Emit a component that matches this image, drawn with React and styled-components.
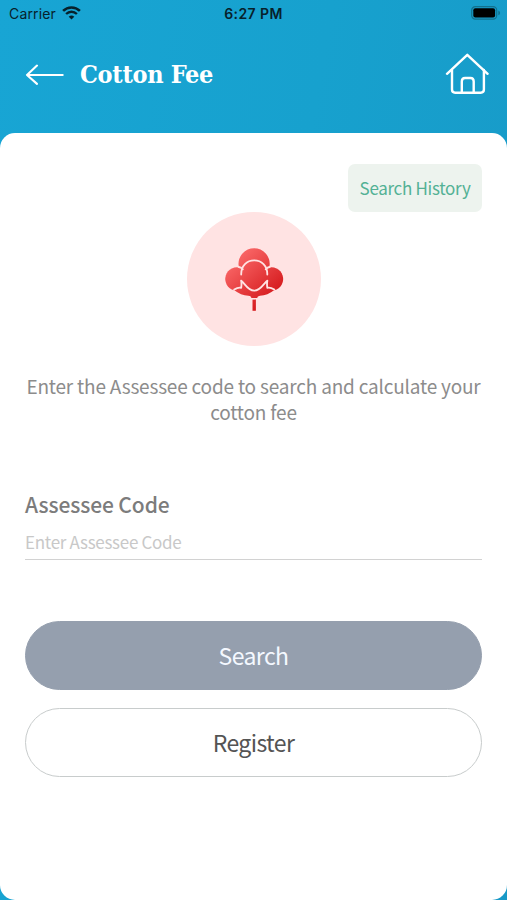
import React from "react";
import styled, { createGlobalStyle, css } from "styled-components";

const GlobalStyle = createGlobalStyle`
  * {
    box-sizing: border-box;
  }

  body {
    margin: 0;
    font-family: "Noto Sans CJK SC", "Open Sans", sans-serif;
  }
`;

const Screen = styled.div`
  display: flex;
  flex-direction: column;
  height: 900px;
  background: linear-gradient(100deg, #18a5d4 0%, #17a1ce 50%, #1899c7 100%);
`;

const StatusBar = styled.div`
  display: grid;
  grid-template-columns: 1fr auto 1fr;
  align-items: center;
  height: 28px;
  padding: 0 6px 2px;
  font-family: Inter, sans-serif;
  font-size: 14px;
  color: #07212b;
`;

const Carrier = styled.div`
  display: flex;
  align-items: center;
  gap: 6px;
  padding-left: 3px;
  letter-spacing: 0.15px;
`;

const Clock = styled.div`
  font-weight: 600;
  letter-spacing: 0.4px;
`;

const Battery = styled.svg`
  justify-self: end;
`;

const Header = styled.header`
  display: flex;
  align-items: center;
  height: 105px;
  padding: 0 18px 13px 25px;
`;

const Title = styled.h1`
  flex: 1;
  margin: 1px 0 0 16px;
  font-family: "DejaVu Serif", serif;
  font-stretch: condensed;
  font-size: 25px;
  font-weight: 700;
  line-height: 32px;
  letter-spacing: -0.3px;
  color: #fff;
`;

const IconButton = styled.button`
  display: flex;
  padding: 0;
  border: 0;
  background: none;
`;

const Card = styled.main`
  display: flex;
  flex: 1;
  flex-direction: column;
  padding: 31px 25px 0;
  border-radius: 15px;
  background: #fff;
`;

const HistoryButton = styled.button`
  align-self: flex-end;
  width: 134px;
  height: 48px;
  padding: 0 0 1px;
  border: 0;
  border-radius: 7px;
  background: #edf3ee;
  font-family: inherit;
  font-size: 17px;
  letter-spacing: -0.3px;
  color: #53b195;
  white-space: nowrap;
`;

const Emblem = styled.div`
  display: flex;
  align-items: center;
  align-self: center;
  justify-content: center;
  width: 134px;
  height: 134px;
  padding-top: 2px;
  border-radius: 50%;
  background: #ffe3e3;
`;

const Intro = styled.p`
  margin: 27px -5px 0;
  font-size: 19px;
  line-height: 26px;
  letter-spacing: -0.19px;
  text-align: center;
  color: #8c8c8c;
`;

const Field = styled.label`
  display: flex;
  flex-direction: column;
  height: 75px;
  margin-top: 60px;
  border-bottom: 1px solid #d2d2d2;
`;

const FieldLabel = styled.span`
  font-size: 21px;
  font-weight: 500;
  line-height: 38px;
  letter-spacing: -0.1px;
  color: #7c7c7c;
`;

const FieldInput = styled.input`
  width: 100%;
  height: 36px;
  padding: 0;
  border: 0;
  outline: 0;
  background: none;
  font-family: inherit;
  font-size: 17px;
  letter-spacing: -0.3px;

  &::placeholder {
    color: #c8c8c8;
    opacity: 1;
  }
`;

const Actions = styled.div`
  display: flex;
  flex-direction: column;
  gap: 18px;
  margin-top: 61px;
`;

const Button = styled.button`
  height: 69px;
  padding: 0 0 2px;
  border: 1px solid #c8cccc;
  border-radius: 35px;
  background: #fff;
  font-family: inherit;
  font-size: 23px;
  letter-spacing: -0.6px;
  color: #545454;

  ${props =>
    props.$filled &&
    css`
      border-color: #959fae;
      background: #959fae;
      color: #f4f8ff;
    `}
`;

const WifiIcon = () => (
  <svg width="19" height="14" viewBox="0 0 19 14" fill="none" stroke="#07212b">
    <path d="M1.1 4.9C5.8.3 13.2.3 17.9 4.9" strokeWidth="2.6" />
    <path d="M4.1 8C7.2 5 11.8 5 14.9 8" strokeWidth="2.4" />
    <path d="M9.5 13.5 6.7 10.7Q9.5 8.4 12.3 10.7Z" fill="#07212b" stroke="none" />
  </svg>
);

const BatteryIcon = () => (
  <Battery width="30" height="14" viewBox="0 0 30 14">
    <rect x=".7" y=".7" width="25" height="12.4" rx="3.6" fill="none" stroke="#12718e" strokeWidth="1.2" />
    <rect x="2.3" y="2.3" width="21.8" height="9.2" rx="2" fill="#000" />
    <path d="M27.3 4.6q1.8.7 1.8 2.3t-1.8 2.3z" fill="#12718e" />
  </Battery>
);

const BackIcon = () => (
  <svg
    width="39"
    height="22"
    viewBox="0 0 39 22"
    fill="none"
    stroke="#fff"
    strokeWidth="2.1"
    strokeLinecap="round"
    strokeLinejoin="round"
  >
    <path d="M12 2.6 2 12 12 20.9M2 12H37.7" />
  </svg>
);

const HomeIcon = () => (
  <svg
    width="44"
    height="42"
    viewBox="0 0 44 42"
    fill="none"
    stroke="#fff"
    strokeWidth="2.4"
    strokeLinecap="round"
    strokeLinejoin="round"
  >
    <path d="M2 20.8 22.3 1.8 42.6 20.8" />
    <path d="M7 17V36.5Q7 39.7 10.2 39.7H35.7Q38.9 39.7 38.9 36.5V17" />
    <path d="M16.8 39.5V28.5Q16.8 25 20 25H25.5Q28.7 25 28.7 28.5V39.5" />
  </svg>
);

const CottonIcon = () => (
  <svg width="80" height="80" viewBox="0 0 80 80">
    <defs>
      <linearGradient id="cotton" gradientUnits="userSpaceOnUse" x1="20" y1="15" x2="57" y2="57">
        <stop offset="0" stopColor="#fb6a6a" />
        <stop offset="1" stopColor="#d61c1f" />
      </linearGradient>
    </defs>
    <g fill="url(#cotton)">
      <path d="M24.6 25.6A15.6 15.6 0 1 1 55.6 25.6C54.8 27 53.5 27.6 52.8 28.8L40 45 27.4 28.8C26.7 27.6 25.4 27 24.6 25.6Z" />
      <path d="M27 28A11.7 11.7 0 1 0 20 50.3L40 45Z" />
      <path d="M53.4 28A11.7 11.7 0 1 1 60.4 50.3L40 45Z" />
      <ellipse cx="40.2" cy="35" rx="14" ry="15.5" />
      <path d="M20 50Q26 49.6 26.7 41L54 41Q54.6 49.6 60.4 50Q53.5 55.4 46 55.8Q43.2 56 43.2 58H37.3Q37.3 56 34.4 55.8Q26.9 55.4 20 50Z" />
      <path d="M38.5 59.6h3.4v11.2h-3.4z" />
    </g>
    <g fill="none" stroke="#ffe3e3" strokeWidth="1.8" strokeLinecap="round" strokeLinejoin="round">
      <path d="M27.2 34.5C27 25.6 33 20.3 40.2 20.3S53.5 25.6 53.3 34.5" />
      <path d="M24.6 27Q27 27.2 28.8 29.3M55.8 27Q53.5 27.2 51.7 29.3" />
      <path d="M20.2 49.6Q24.5 46.8 27.2 47.8Q27.8 43.8 27.1 40.6C30 42.2 33.5 50.7 40.2 50.7S50.5 42.2 53.4 40.6Q52.7 43.8 53.3 47.8Q56 46.8 60.3 49.6" />
    </g>
  </svg>
);

const App = () => {
  return (
    <>
      <GlobalStyle />
      <Screen>
        <StatusBar>
          <Carrier>
            Carrier
            <WifiIcon />
          </Carrier>
          <Clock>6:27 PM</Clock>
          <BatteryIcon />
        </StatusBar>
        <Header>
          <IconButton aria-label="Back">
            <BackIcon />
          </IconButton>
          <Title>Cotton Fee</Title>
          <IconButton aria-label="Home">
            <HomeIcon />
          </IconButton>
        </Header>
        <Card>
          <HistoryButton>Search History</HistoryButton>
          <Emblem>
            <CottonIcon />
          </Emblem>
          <Intro>
            Enter the Assessee code to search and calculate your
            <br />
            cotton fee
          </Intro>
          <Field>
            <FieldLabel>Assessee Code</FieldLabel>
            <FieldInput placeholder="Enter Assessee Code" />
          </Field>
          <Actions>
            <Button $filled>Search</Button>
            <Button>Register</Button>
          </Actions>
        </Card>
      </Screen>
    </>
  );
};

export default App;
